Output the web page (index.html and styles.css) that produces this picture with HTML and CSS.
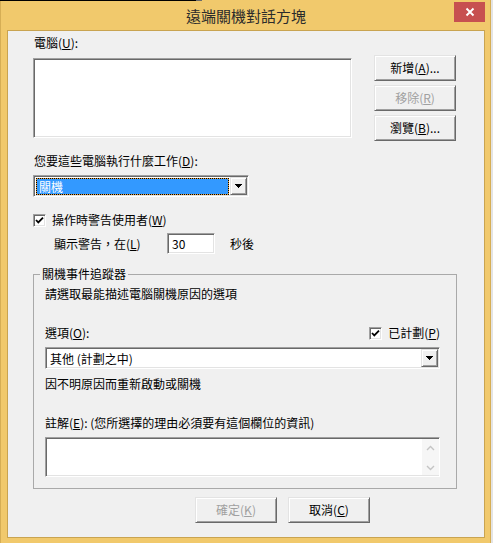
FILE: index.html
```html
<!DOCTYPE html>
<html lang="zh-Hant">
<head>
  <meta charset="UTF-8" />
  <title>遠端關機對話方塊</title>
  <link rel="stylesheet" href="styles.css">
</head>
<body>

  <div class="window">

    <div class="titlebar">
      <span class="title">遠端關機對話方塊</span>
      <button type="button" class="close" aria-label="關閉">
        <svg width="10" height="10" viewBox="0 0 10 10"><path d="M1.5 1.5 L8.5 8.5 M8.5 1.5 L1.5 8.5" stroke="#fff" stroke-width="1.9" fill="none"/></svg>
      </button>
    </div>

    <div class="client">

      <div class="label first">電腦(<u>U</u>):</div>
      <div class="computers">
        <div class="listbox sunken"></div>
        <div class="side-buttons">
          <button type="button" class="btn">新增(<u>A</u>)...</button>
          <button type="button" class="btn" disabled>移除(<u>R</u>)</button>
          <button type="button" class="btn">瀏覽(<u>B</u>)...</button>
        </div>
      </div>

      <div class="label action-label">您要這些電腦執行什麼工作(<u>D</u>):</div>
      <div class="combo sunken action-combo">
        <div class="combo-value selected"><span>關機</span></div>
        <span class="combo-arrow raised">
          <svg width="7" height="4" viewBox="0 0 7 4" shape-rendering="crispEdges"><path d="M0 0 H7 L4 4 H3 Z" fill="#000"/></svg>
        </span>
      </div>

      <label class="check warn-check">
        <span class="box sunken">
          <svg width="11" height="11" viewBox="0 0 11 11"><path d="M2 5 L4.3 7.4 L9 2.6" stroke="#000" stroke-width="1.8" fill="none"/></svg>
        </span>
        操作時警告使用者(<u>W</u>)
      </label>

      <div class="delay-row">
        <span class="delay-label">顯示警告，在(<u>L</u>)</span>
        <div class="edit sunken">30</div>
        <span class="delay-unit">秒後</span>
      </div>

      <fieldset class="tracker">
        <legend>關機事件追蹤器</legend>

        <div class="reason-intro">請選取最能描述電腦關機原因的選項</div>

        <div class="option-row">
          <span>選項(<u>O</u>):</span>
          <label class="check">
            <span class="box sunken">
              <svg width="11" height="11" viewBox="0 0 11 11"><path d="M2 5 L4.3 7.4 L9 2.6" stroke="#000" stroke-width="1.8" fill="none"/></svg>
            </span>
            已計劃(<u>P</u>)
          </label>
        </div>

        <div class="combo sunken option-combo">
          <div class="combo-value"><span>其他 (計劃之中)</span></div>
          <span class="combo-arrow raised">
            <svg width="7" height="4" viewBox="0 0 7 4" shape-rendering="crispEdges"><path d="M0 0 H7 L4 4 H3 Z" fill="#000"/></svg>
          </span>
        </div>

        <div class="reason-desc">因不明原因而重新啟動或關機</div>

        <div class="comment-label">註解(<u>E</u>): (您所選擇的理由必須要有這個欄位的資訊)</div>
        <div class="comment sunken">
          <div class="vscroll">
            <svg width="9" height="6" viewBox="0 0 9 6"><path d="M1 5 L4.5 1.5 L8 5" stroke="#c4c4c4" stroke-width="1.4" fill="none"/></svg>
            <svg width="9" height="6" viewBox="0 0 9 6"><path d="M1 1 L4.5 4.5 L8 1" stroke="#c4c4c4" stroke-width="1.4" fill="none"/></svg>
          </div>
        </div>
      </fieldset>

      <div class="dialog-buttons">
        <button type="button" class="btn" disabled>確定(<u>K</u>)</button>
        <button type="button" class="btn">取消(<u>C</u>)</button>
      </div>

    </div>
  </div>

</body>
</html>
```

FILE: styles.css
```css
/* 傳統 Windows 對話方塊 */
* {
  box-sizing: border-box;
}
body {
  margin: 0;
  background: #e4e4e4;
  font-family: "Noto Sans CJK TC", "Noto Sans", sans-serif;
  font-size: 12px;
  line-height: 16px;
  color: #000;
}
u {
  text-decoration: underline;
  text-underline-offset: 1px;
}

/* 視窗外框 */
.window {
  position: relative;
  width: 491px;
  height: 543px;
  padding: 0 5px 0 6px;
  background: #f1c96c;
  border-left: 1px solid #d6ae55;
  border-right: 1px solid #d6ae55;
}
.window::before {
  content: "";
  position: absolute;
  top: 0;
  left: -1px;
  width: 196px;
  height: 1px;
  background: #000;
  box-shadow: 6px 0 #6b6b6b;
}
.titlebar {
  display: grid;
  grid-template-columns: 1fr auto 1fr;
  height: 30px;
}
.title {
  grid-column: 2;
  padding-top: 2px;
  font-size: 15px;
  line-height: 28px;
  color: #2b2b2b;
}
.close {
  grid-column: 3;
  justify-self: end;
  align-self: start;
  display: flex;
  align-items: center;
  justify-content: center;
  width: 31px;
  height: 20px;
  margin-top: 2px;
  padding: 0;
  border: none;
  background: #c75050;
}

/* 內容區 */
.client {
  height: 508px;
  padding: 4px 0 0 25px;
  background: #f0f0f0;
  border: 1px solid #c9a451;
}
.label {
  padding-left: 1px;
}

/* 3D 邊框 */
.sunken {
  background: #fff;
  border: 1px solid;
  border-color: #a0a0a0 #fff #fff #a0a0a0;
  box-shadow: inset 1px 1px #696969, inset -1px -1px #e3e3e3;
}
.raised {
  background: #f0f0f0;
  border: 1px solid;
  border-color: #e3e3e3 #696969 #696969 #e3e3e3;
  box-shadow: inset 1px 1px #fff, inset -1px -1px #a0a0a0;
}
.btn {
  display: block;
  width: 82px;
  height: 26px;
  padding: 0;
  font: inherit;
  color: #000;
  background: #f0f0f0;
  border: 1px solid;
  border-color: #e3e3e3 #696969 #696969 #e3e3e3;
  box-shadow: inset 1px 1px #fff, inset -1px -1px #a0a0a0;
}
.btn:disabled {
  color: #a0a0a0;
}

/* 電腦清單 */
.computers {
  display: flex;
  margin-top: 4px;
}
.listbox {
  width: 319px;
  height: 80px;
  margin-top: 3px;
}
.side-buttons {
  display: flex;
  flex-direction: column;
  gap: 4px;
  margin-left: 22px;
}

/* 下拉式方塊 */
.action-label {
  margin-top: 12px;
}
.combo {
  display: flex;
  height: 22px;
  padding: 1px;
}
.action-combo {
  width: 216px;
  margin-top: 6px;
}
.combo-value {
  flex: 1;
  padding: 1px 1px 0 1px;
}
.combo-value span {
  display: block;
  height: 100%;
  padding-left: 2px;
  line-height: 15px;
}
.option-combo .combo-value span {
  padding-left: 2px;
  line-height: 17px;
}
.selected span {
  color: #fff;
  border: 1px dotted #000;
  background: linear-gradient(#3399ff, #3399ff) padding-box, linear-gradient(#e8a03c, #e8a03c) border-box;
}
.combo-arrow {
  display: flex;
  align-items: center;
  justify-content: center;
  width: 17px;
}

/* 核取方塊 */
.check {
  display: flex;
  align-items: center;
}
.box {
  flex: none;
  width: 13px;
  height: 13px;
  margin-right: 6px;
}
.box svg {
  display: block;
}
.warn-check {
  margin-top: 15px;
}
.delay-row {
  display: flex;
  align-items: center;
  margin-top: 5px;
  padding-left: 21px;
}
.delay-label {
  width: 113px;
}
.edit {
  width: 48px;
  height: 21px;
  padding: 1px 4px;
  line-height: 17px;
}
.delay-unit {
  margin-left: 15px;
}

/* 關機事件追蹤器 */
.tracker {
  width: 424px;
  margin: 12px 0 0;
  padding: 0 16px 11px 11px;
  border: 1px solid #a9a9a9;
  min-inline-size: 0;
}
.tracker legend {
  margin-left: -5px;
  padding: 0 2px;
  line-height: 16px;
}
.reason-intro {
  margin-top: 4px;
}
.option-row {
  display: flex;
  justify-content: space-between;
  align-items: center;
  margin-top: 23px;
}
.option-combo {
  margin-top: 6px;
}
.reason-desc {
  margin-top: 7px;
}
.comment-label {
  margin-top: 23px;
}
.comment {
  display: flex;
  justify-content: flex-end;
  height: 40px;
  margin-top: 6px;
  padding: 1px;
}
.vscroll {
  display: flex;
  flex-direction: column;
  justify-content: space-between;
  align-items: center;
  width: 17px;
  margin-right: -1px;
  padding: 6px 0 4px;
  background: #f6f6f6;
}
.vscroll svg {
  display: block;
}

/* 確定 / 取消 */
.dialog-buttons {
  display: flex;
  gap: 11px;
  margin-top: 8px;
  padding-left: 162px;
}
```
